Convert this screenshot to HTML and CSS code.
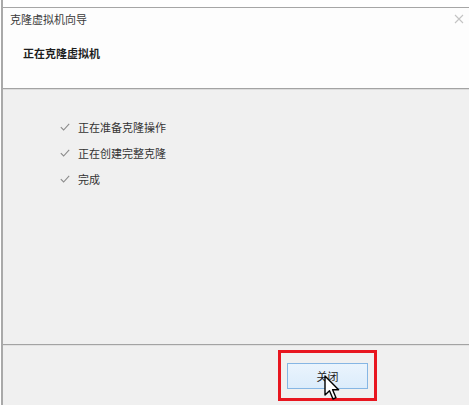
FILE: index.html
```html
<!DOCTYPE html>
<html lang="zh">
<head>
<meta charset="utf-8">
<title>克隆虚拟机向导</title>
<link rel="stylesheet" href="styles.css">
</head>
<body>
<div class="frame">
  <div class="dialog">
    <div class="titlebar">
      <span class="title">克隆虚拟机向导</span>
      <svg class="close" width="10" height="10" viewBox="0 0 10 10"><path d="M1 1L9 9M9 1L1 9" stroke="#c4c4c4" stroke-width="1.1" fill="none"/></svg>
    </div>
    <div class="header">
      <div class="heading">正在克隆虚拟机</div>
    </div>
    <div class="body">
      <ul class="steps">
        <li class="step"><svg class="check" width="10" height="8" viewBox="0 0 10 8"><path d="M0.8 4.2L3.6 7L9.2 0.8" stroke="#8a8a8a" stroke-width="1.1" fill="none"/></svg><span>正在准备克隆操作</span></li>
        <li class="step"><svg class="check" width="10" height="8" viewBox="0 0 10 8"><path d="M0.8 4.2L3.6 7L9.2 0.8" stroke="#8a8a8a" stroke-width="1.1" fill="none"/></svg><span>正在创建完整克隆</span></li>
        <li class="step"><svg class="check" width="10" height="8" viewBox="0 0 10 8"><path d="M0.8 4.2L3.6 7L9.2 0.8" stroke="#8a8a8a" stroke-width="1.1" fill="none"/></svg><span>完成</span></li>
      </ul>
    </div>
    <div class="footer">
      <button class="btn">关闭</button>
    </div>
  </div>
  <div class="highlight"></div>
  <svg class="cursor" width="17" height="27" viewBox="0 0 17 27"><path d="M1 1L1 20L5.5 15.8L9 24L12 22.7L8.6 14.7L14.6 14.7Z" fill="#fff" stroke="#000" stroke-width="1.4" stroke-linejoin="round"/></svg>
</div>
</body>
</html>
```
FILE: styles.css
```css
html, body {
  margin: 0;
  padding: 0;
  background: #ffffff;
}
body {
  font-family: "Noto Sans CJK SC", "Noto Sans", sans-serif;
  width: 469px;
  height: 405px;
  overflow: hidden;
}
.frame {
  position: relative;
  margin-left: 1px;
  height: 405px;
  border-left: 2px solid #a9a9a9;
  padding-top: 7px;
  box-sizing: border-box;
}
.dialog {
  border-top: 1px solid #a6a6a6;
  display: flex;
  flex-direction: column;
  height: 397px;
}
.titlebar {
  height: 22px;
  display: flex;
  align-items: center;
  padding: 0 5px 0 7px;
  background: #fdfdfd;
}
.title {
  font-size: 11px;
  color: #3a3a3a;
  line-height: 16px;
}
.close {
  margin-left: auto;
}
.header {
  background: #fdfdfd;
  height: 59px;
  box-sizing: border-box;
  padding: 15px 0 0 20px;
  border-bottom: 1px solid #a3a3a3;
}
.heading {
  font-size: 11px;
  font-weight: bold;
  color: #1e1e1e;
  line-height: 16px;
}
.body {
  flex: 1;
  background: #f0f0f0;
  border-top: 1px solid #dcdcdc;
  border-bottom: 1px solid #a3a3a3;
}
.steps {
  list-style: none;
  margin: 0;
  padding: 24px 0 0 57px;
}
.step {
  display: flex;
  align-items: center;
  height: 26px;
  font-size: 11px;
  color: #333333;
}
.check {
  margin-right: 8px;
}
.footer {
  height: 60px;
  box-sizing: border-box;
  background: #f0f0f0;
  border-top: 1px solid #e2e2e2;
  display: flex;
  justify-content: flex-end;
  align-items: flex-start;
  padding: 17px 101px 0 0;
}
.btn {
  width: 81px;
  height: 26px;
  border: 1px solid #86b6e4;
  background: linear-gradient(#eaf4fd, #dcecfb);
  font-family: inherit;
  font-size: 11px;
  color: #222;
  padding: 0;
}
.highlight {
  position: absolute;
  left: 275px;
  top: 350px;
  width: 99px;
  height: 51px;
  border: 3px solid #e8161f;
  box-sizing: border-box;
}
.cursor {
  position: absolute;
  left: 321px;
  top: 375px;
}
```
